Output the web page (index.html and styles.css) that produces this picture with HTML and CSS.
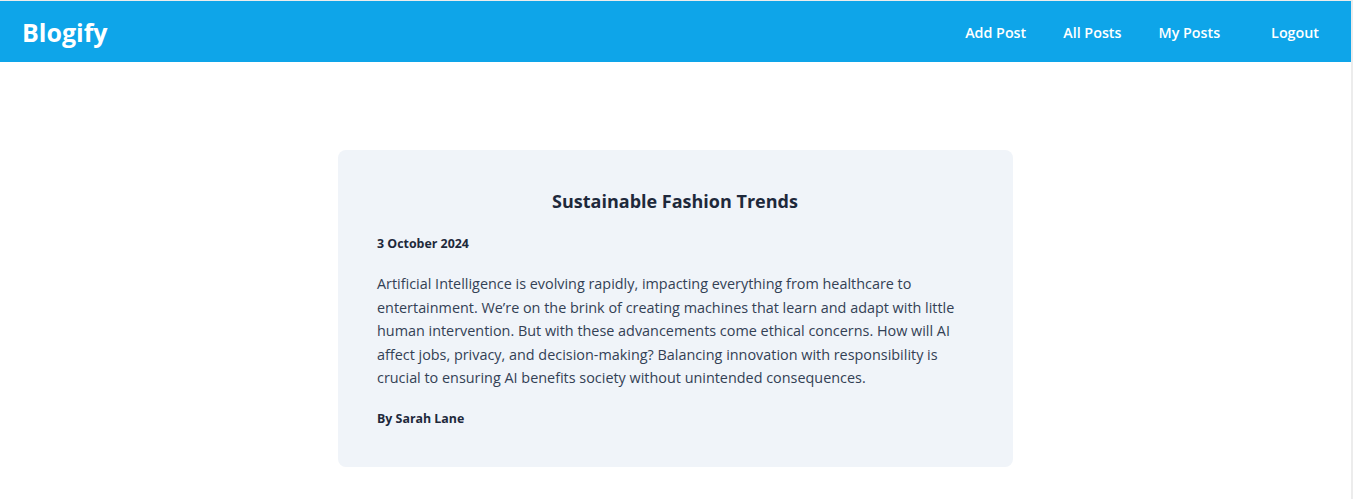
FILE: index.html
```html
<!DOCTYPE html>
<html lang="en">
<head>
<meta charset="utf-8">
<title>Blogify</title>
<link rel="stylesheet" href="styles.css">
</head>
<body>
<div class="page">
  <header class="navbar">
    <a class="brand" href="#">Blogify</a>
    <nav class="nav">
      <a class="nav-link" href="#">Add Post</a>
      <a class="nav-link" href="#">All Posts</a>
      <a class="nav-link" href="#">My Posts</a>
      <a class="nav-link logout" href="#">Logout</a>
    </nav>
  </header>
  <main class="main">
    <article class="card">
      <h2 class="card-title">Sustainable Fashion Trends</h2>
      <p class="card-date">3 October 2024</p>
      <p class="card-body">Artificial Intelligence is evolving rapidly, impacting everything from healthcare to entertainment. We’re on the brink of creating machines that learn and adapt with little human intervention. But with these advancements come ethical concerns. How will AI affect jobs, privacy, and decision-making? Balancing innovation with responsibility is crucial to ensuring AI benefits society without unintended consequences.</p>
      <p class="card-author">By Sarah Lane</p>
    </article>
  </main>
</div>
</body>
</html>
```

FILE: styles.css
```css
* { box-sizing: border-box; }
html, body { margin: 0; padding: 0; height: 100%; }
body {
  background: #ececec;
  font-family: "Open Sans", "Noto Sans", sans-serif;
  padding: 1px 2px 0 0;
}
.page {
  background: #ffffff;
  min-height: 100%;
}
.navbar {
  height: 61px;
  background: #0ea5e9;
  display: flex;
  align-items: center;
  justify-content: space-between;
  padding: 0 32px 0 22px;
}
.brand {
  color: #ffffff;
  font-weight: 700;
  font-size: 25px;
  text-decoration: none;
}
.nav {
  display: flex;
  align-items: center;
  gap: 37px;
  padding-top: 2px;
}
.nav-link {
  color: #ffffff;
  font-weight: 600;
  font-size: 14.3px;
  text-decoration: none;
}
.logout { margin-left: 14px; }
.main {
  display: flex;
  justify-content: center;
  padding-top: 88px;
}
.card {
  width: 675px;
  background: #f0f4f9;
  border-radius: 8px;
  padding: 39px 40px 40px 39px;
}
.card-title {
  margin: 0 0 22px;
  text-align: center;
  font-size: 18px;
  font-weight: 700;
  color: #1e293b;
}
.card-date {
  margin: 0 0 20px;
  font-size: 12.4px;
  font-weight: 700;
  color: #1e293b;
}
.card-body {
  margin: 0 0 20px;
  font-size: 14.4px;
  line-height: 23.6px;
  color: #334155;
}
.card-author {
  margin: 0;
  font-size: 12.4px;
  font-weight: 700;
  color: #1e293b;
}
```
